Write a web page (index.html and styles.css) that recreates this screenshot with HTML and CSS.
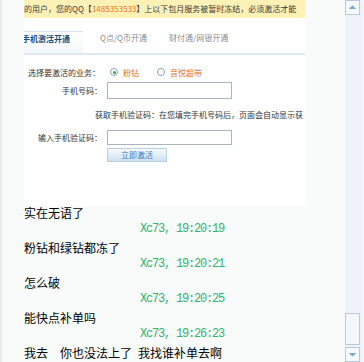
FILE: index.html
```html
<!DOCTYPE html>
<html lang="zh">
<head>
<meta charset="utf-8">
<link rel="stylesheet" href="styles.css">
</head>
<body>
<div class="window">
  <div class="main">
    <div class="shot">
      <div class="notice">的用户，您的QQ【<span class="qq">1485353533</span>】上以下包月服务被暂时冻结，必须激活才能</div>
      <div class="tabs">
        <div class="tab active"><span class="tab-text">手机激活开通</span></div>
        <div class="tab tab2">Q点/Q币开通</div>
        <div class="tab tab3">财付通/网银开通</div>
      </div>
      <div class="form">
        <div class="row row1">
          <span class="label">选择要激活的业务：</span>
          <span class="radio checked"></span><span class="opt">粉钻</span>
          <span class="radio second"></span><span class="opt">音悦超带</span>
        </div>
        <div class="row row2">
          <span class="label">手机号码：</span>
          <span class="input tall"></span>
        </div>
        <div class="row row3">获取手机验证码：在您填完手机号码后，页面会自动显示获</div>
        <div class="row row4">
          <span class="label">输入手机验证码：</span>
          <span class="input"></span>
        </div>
        <div class="row row5">
          <span class="button">立即激活</span>
        </div>
      </div>
    </div>
    <div class="chat">
      <div class="msg">实在无语了</div>
      <div class="ts">Xc73, 19:20:19</div>
      <div class="msg">粉钻和绿钻都冻了</div>
      <div class="ts">Xc73, 19:20:21</div>
      <div class="msg">怎么破</div>
      <div class="ts">Xc73, 19:20:25</div>
      <div class="msg">能快点补单吗</div>
      <div class="ts">Xc73, 19:26:23</div>
      <div class="msg">我去&#8194;&#8194;你也没法上了&#8194;我找谁补单去啊</div>
    </div>
  </div>
  <div class="scrollbar">
    <div class="sb-btn"><svg width="14" height="13" viewBox="0 0 14 13"><path d="M3 8 L7 4 L11 8 Z" fill="#7ea6d2"/></svg></div>
    <div class="sb-space"></div>
    <div class="sb-thumb"></div>
    <div class="sb-btn down"><svg width="14" height="13" viewBox="0 0 14 13"><path d="M3 5 L7 9 L11 5 Z" fill="#7ea6d2"/></svg></div>
  </div>
</div>
</body>
</html>
```

FILE: styles.css
```css
html, body {
  margin: 0;
  padding: 0;
}
body {
  background: #f9fbfb;
  width: 364px;
  height: 362px;
  overflow: hidden;
  font-family: "Noto Sans CJK SC", "Noto Sans", sans-serif;
}
.window {
  display: flex;
  width: 364px;
  height: 362px;
}
.main {
  border-left: 2px solid #e7ebeb;
  padding-left: 22px;
  box-sizing: border-box;
  width: 345px;
  overflow: hidden;
}
.shot {
  width: 281px;
  height: 206px;
  background: #ffffff;
  overflow: hidden;
  font-size: 8px;
  color: #333;
}
.notice {
  height: 18px;
  line-height: 17px;
  background: #fdf1b6;
  white-space: nowrap;
  overflow: hidden;
  color: #3a3a3a;
}
.qq {
  color: #f07021;
}
.tabs {
  height: 35px;
  border-bottom: 2px solid #dde9f2;
  display: flex;
  align-items: flex-end;
  white-space: nowrap;
}
.tab {
  height: 22px;
  line-height: 14px;
  color: #8c8c8c;
}
.tab.active {
  width: 59px;
  overflow: hidden;
  border-top: 1px solid #d6e4ef;
  background: linear-gradient(#ffffff, #f3f8fc);
  color: #1c4e7b;
  font-weight: bold;
  box-sizing: border-box;
}
.tab-text {
  display: inline-block;
  margin-left: -2px;
}
.tab2 {
  margin-left: 17px;
}
.tab3 {
  margin-left: 22px;
}
.form {
  padding-top: 8px;
  display: flex;
  flex-direction: column;
}
.row {
  display: flex;
  align-items: center;
  white-space: nowrap;
}
.label {
  width: 78px;
  text-align: right;
  margin-right: 5px;
  box-sizing: border-box;
}
.row1 {
  height: 18px;
}
.row1 .label {
  padding-right: 2px;
}
.row2 {
  height: 17px;
  margin-top: 1px;
}
.row3 {
  height: 18px;
  margin-top: 6px;
  padding-left: 71px;
}
.row4 {
  height: 15px;
  margin-top: 7px;
}
.row5 {
  height: 14px;
  margin-top: 3px;
  padding-left: 83px;
}
.radio {
  width: 8px;
  height: 8px;
  border: 1px solid #8ea2b8;
  border-radius: 50%;
  box-sizing: border-box;
  background: #fff;
  margin-left: 3px;
  margin-right: 5px;
  position: relative;
}
.radio.checked::after {
  content: "";
  position: absolute;
  left: 1.5px;
  top: 1.5px;
  width: 3px;
  height: 3px;
  border-radius: 50%;
  background: #2fa84a;
}
.radio.second {
  margin-left: 18px;
}
.opt {
  color: #e2731f;
}
.input {
  width: 125px;
  height: 15px;
  border: 1px solid #a9b3bd;
  background: #fff;
  box-sizing: border-box;
}
.input.tall {
  height: 17px;
}
.button {
  width: 60px;
  height: 14px;
  border: 1px solid #b7cfe5;
  box-sizing: border-box;
  background: linear-gradient(#f6fafd, #cde1f2);
  color: #3a73ad;
  text-align: center;
  line-height: 12px;
}
.chat {
  display: flex;
  flex-direction: column;
  font-size: 12px;
  color: #000;
}
.msg {
  height: 14px;
  line-height: 14px;
  white-space: nowrap;
  margin-top: 5px;
}
.msg:first-child {
  margin-top: 0;
}
.ts {
  height: 14px;
  line-height: 14px;
  margin-top: 2px;
  padding-left: 116px;
  font-family: "Liberation Mono", "DejaVu Sans Mono", monospace;
  letter-spacing: -1.2px;
  color: #35b26c;
  white-space: nowrap;
}
.scrollbar {
  width: 19px;
  height: 362px;
  background: #eff3f9;
  display: flex;
  flex-direction: column;
  padding-right: 3px;
  box-sizing: border-box;
  border-right: 1px solid #f4f7fb;
}
.sb-btn {
  height: 15px;
  border: 1px solid #b9c8db;
  background: #f6f9fc;
  box-sizing: border-box;
  display: flex;
  align-items: center;
  justify-content: center;
}
.sb-btn svg {
  display: block;
}
.sb-space {
  flex: 1;
}
.sb-thumb {
  height: 32px;
  border: 1px solid #b9c8db;
  background: #f3f6fb;
  box-sizing: border-box;
  margin-bottom: 2px;
}
```
